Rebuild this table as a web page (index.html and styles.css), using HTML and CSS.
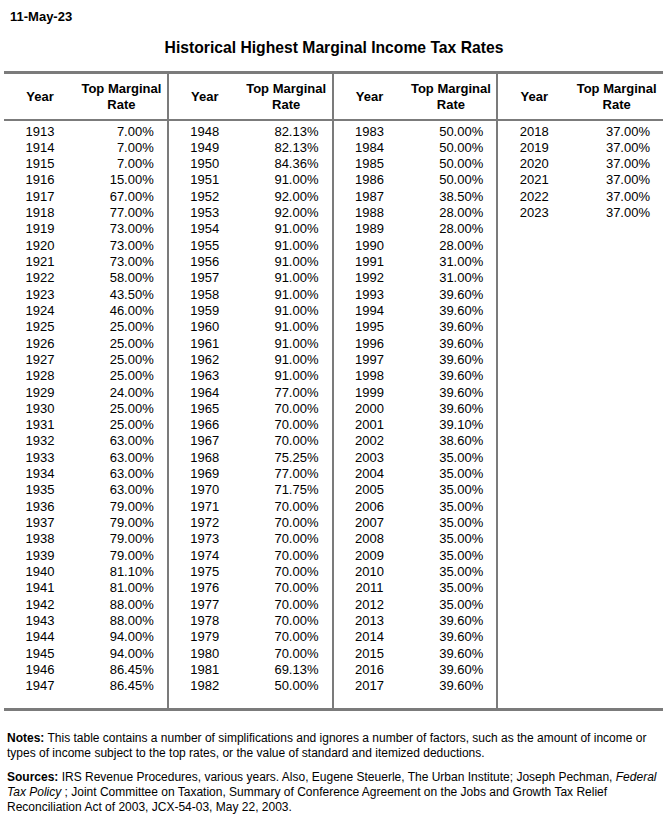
FILE: index.html
```html
<!DOCTYPE html>
<html>
<head>
<meta charset="utf-8">
<link rel="stylesheet" href="styles.css">
</head>
<body>
<div class="page">
  <div class="date">11-May-23</div>
  <h1 class="title">Historical Highest Marginal Income Tax Rates</h1>
  <div class="table">
    <div class="group">
      <div class="head"><span class="h-year">Year</span><span class="h-rate">Top Marginal<br>Rate</span></div>
      <div class="rows">
        <span>1913</span><span>7.00%</span>
        <span>1914</span><span>7.00%</span>
        <span>1915</span><span>7.00%</span>
        <span>1916</span><span>15.00%</span>
        <span>1917</span><span>67.00%</span>
        <span>1918</span><span>77.00%</span>
        <span>1919</span><span>73.00%</span>
        <span>1920</span><span>73.00%</span>
        <span>1921</span><span>73.00%</span>
        <span>1922</span><span>58.00%</span>
        <span>1923</span><span>43.50%</span>
        <span>1924</span><span>46.00%</span>
        <span>1925</span><span>25.00%</span>
        <span>1926</span><span>25.00%</span>
        <span>1927</span><span>25.00%</span>
        <span>1928</span><span>25.00%</span>
        <span>1929</span><span>24.00%</span>
        <span>1930</span><span>25.00%</span>
        <span>1931</span><span>25.00%</span>
        <span>1932</span><span>63.00%</span>
        <span>1933</span><span>63.00%</span>
        <span>1934</span><span>63.00%</span>
        <span>1935</span><span>63.00%</span>
        <span>1936</span><span>79.00%</span>
        <span>1937</span><span>79.00%</span>
        <span>1938</span><span>79.00%</span>
        <span>1939</span><span>79.00%</span>
        <span>1940</span><span>81.10%</span>
        <span>1941</span><span>81.00%</span>
        <span>1942</span><span>88.00%</span>
        <span>1943</span><span>88.00%</span>
        <span>1944</span><span>94.00%</span>
        <span>1945</span><span>94.00%</span>
        <span>1946</span><span>86.45%</span>
        <span>1947</span><span>86.45%</span>
      </div>
    </div>
    <div class="group">
      <div class="head"><span class="h-year">Year</span><span class="h-rate">Top Marginal<br>Rate</span></div>
      <div class="rows">
        <span>1948</span><span>82.13%</span>
        <span>1949</span><span>82.13%</span>
        <span>1950</span><span>84.36%</span>
        <span>1951</span><span>91.00%</span>
        <span>1952</span><span>92.00%</span>
        <span>1953</span><span>92.00%</span>
        <span>1954</span><span>91.00%</span>
        <span>1955</span><span>91.00%</span>
        <span>1956</span><span>91.00%</span>
        <span>1957</span><span>91.00%</span>
        <span>1958</span><span>91.00%</span>
        <span>1959</span><span>91.00%</span>
        <span>1960</span><span>91.00%</span>
        <span>1961</span><span>91.00%</span>
        <span>1962</span><span>91.00%</span>
        <span>1963</span><span>91.00%</span>
        <span>1964</span><span>77.00%</span>
        <span>1965</span><span>70.00%</span>
        <span>1966</span><span>70.00%</span>
        <span>1967</span><span>70.00%</span>
        <span>1968</span><span>75.25%</span>
        <span>1969</span><span>77.00%</span>
        <span>1970</span><span>71.75%</span>
        <span>1971</span><span>70.00%</span>
        <span>1972</span><span>70.00%</span>
        <span>1973</span><span>70.00%</span>
        <span>1974</span><span>70.00%</span>
        <span>1975</span><span>70.00%</span>
        <span>1976</span><span>70.00%</span>
        <span>1977</span><span>70.00%</span>
        <span>1978</span><span>70.00%</span>
        <span>1979</span><span>70.00%</span>
        <span>1980</span><span>70.00%</span>
        <span>1981</span><span>69.13%</span>
        <span>1982</span><span>50.00%</span>
      </div>
    </div>
    <div class="group">
      <div class="head"><span class="h-year">Year</span><span class="h-rate">Top Marginal<br>Rate</span></div>
      <div class="rows">
        <span>1983</span><span>50.00%</span>
        <span>1984</span><span>50.00%</span>
        <span>1985</span><span>50.00%</span>
        <span>1986</span><span>50.00%</span>
        <span>1987</span><span>38.50%</span>
        <span>1988</span><span>28.00%</span>
        <span>1989</span><span>28.00%</span>
        <span>1990</span><span>28.00%</span>
        <span>1991</span><span>31.00%</span>
        <span>1992</span><span>31.00%</span>
        <span>1993</span><span>39.60%</span>
        <span>1994</span><span>39.60%</span>
        <span>1995</span><span>39.60%</span>
        <span>1996</span><span>39.60%</span>
        <span>1997</span><span>39.60%</span>
        <span>1998</span><span>39.60%</span>
        <span>1999</span><span>39.60%</span>
        <span>2000</span><span>39.60%</span>
        <span>2001</span><span>39.10%</span>
        <span>2002</span><span>38.60%</span>
        <span>2003</span><span>35.00%</span>
        <span>2004</span><span>35.00%</span>
        <span>2005</span><span>35.00%</span>
        <span>2006</span><span>35.00%</span>
        <span>2007</span><span>35.00%</span>
        <span>2008</span><span>35.00%</span>
        <span>2009</span><span>35.00%</span>
        <span>2010</span><span>35.00%</span>
        <span>2011</span><span>35.00%</span>
        <span>2012</span><span>35.00%</span>
        <span>2013</span><span>39.60%</span>
        <span>2014</span><span>39.60%</span>
        <span>2015</span><span>39.60%</span>
        <span>2016</span><span>39.60%</span>
        <span>2017</span><span>39.60%</span>
      </div>
    </div>
    <div class="group">
      <div class="head"><span class="h-year">Year</span><span class="h-rate">Top Marginal<br>Rate</span></div>
      <div class="rows">
        <span>2018</span><span>37.00%</span>
        <span>2019</span><span>37.00%</span>
        <span>2020</span><span>37.00%</span>
        <span>2021</span><span>37.00%</span>
        <span>2022</span><span>37.00%</span>
        <span>2023</span><span>37.00%</span>
      </div>
    </div>
  </div>
  <div class="notes">
    <p><b>Notes:</b> This table contains a number of simplifications and ignores a number of factors, such as the amount of income or types of income subject to the top rates, or the value of standard and itemized deductions.</p>
    <p><b>Sources:</b> IRS Revenue Procedures, various years. Also, Eugene Steuerle, The Urban Institute; Joseph Pechman, <i>Federal Tax Policy</i> ; Joint Committee on Taxation, Summary of Conference Agreement on the Jobs and Growth Tax Relief Reconciliation Act of 2003, JCX-54-03, May 22, 2003.</p>
  </div>
</div>
</body>
</html>
```

FILE: styles.css
```css
html, body {
  margin: 0;
  padding: 0;
  background: #ffffff;
}
body {
  font-family: "Liberation Sans", Arial, sans-serif;
  color: #000000;
}
.page {
  width: 668px;
  padding-top: 9px;
}
.date {
  font-size: 13px;
  font-weight: bold;
  line-height: 15px;
  padding-left: 10px;
}
.title {
  margin: 15px 0 0 0;
  font-size: 15.7px;
  line-height: 17px;
  font-weight: bold;
  text-align: center;
}
.table {
  margin: 15px 5px 0 4px;
  display: grid;
  grid-template-columns: repeat(4, 1fr);
  border-top: 3px solid #7b7b7b;
  border-bottom: 3px solid #7b7b7b;
}
.group {
  border-right: 2px solid #7b7b7b;
}
.group:last-child {
  border-right: none;
}
.head {
  display: grid;
  grid-template-columns: 72px 1fr;
  align-items: center;
  height: 45px;
  border-bottom: 2px solid #7b7b7b;
  font-size: 13px;
  font-weight: bold;
  line-height: 16px;
  text-align: center;
}
.rows {
  display: grid;
  grid-template-columns: 72px 1fr;
  grid-auto-rows: 16.32px;
  padding: 2.5px 0 14px 0;
  font-size: 13px;
  line-height: 16.32px;
}
.rows span:nth-child(odd) {
  text-align: center;
}
.rows span:nth-child(even) {
  text-align: right;
  padding-right: 13px;
}
.notes {
  padding: 20px 4px 0 7px;
  font-size: 12px;
  line-height: 15px;
}
.notes p {
  margin: 0 0 9px 0;
}
```
